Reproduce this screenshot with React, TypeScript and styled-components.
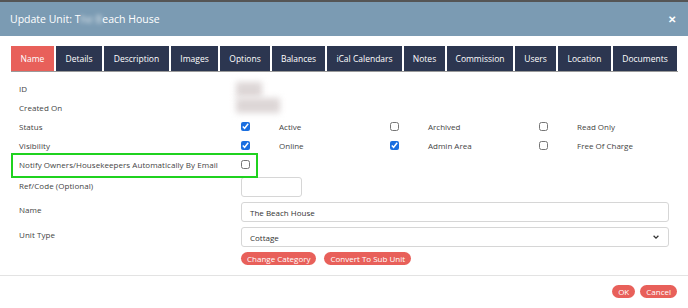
import React from 'react';
import styled, { createGlobalStyle } from 'styled-components';

const Global = createGlobalStyle`
	html, body {
		margin: 0;
		padding: 0;
		background: #fff;
	}

	body {
		font-family: 'Open Sans', 'Liberation Sans', sans-serif;
		color: #333;
	}
`;

const tabs = [
	{ label: 'Name', w: 43 },
	{ label: 'Details', w: 46 },
	{ label: 'Description', w: 65 },
	{ label: 'Images', w: 47 },
	{ label: 'Options', w: 50 },
	{ label: 'Balances', w: 53 },
	{ label: 'iCal Calendars', w: 75 },
	{ label: 'Notes', w: 41 },
	{ label: 'Commission', w: 66 },
	{ label: 'Users', w: 41 },
	{ label: 'Location', w: 53 },
	{ label: 'Documents', w: 64 },
];

// styles
const styles = {
	modal: {
		Modal: styled.div`
			width: 688px;
			height: 308px;
			border-top: 2px solid #555;
			box-sizing: border-box;
			display: flex;
			flex-flow: column;
			overflow: hidden;
		`,

		Header: styled.div`
			flex: 0 0 34px;

			background: #7b9bb3;
			padding: 0 12px 0 10px;
			align-items: center;
			display: flex;
		`,

		Title: styled.div`
			flex: 1 1 auto;

			color: #fff;
			font-size: 10.5px;
		`,

		Blur: styled.span`
			filter: blur(2px);
			opacity: 0.8;
		`,

		Close: styled.div`
			color: #fff;
			font-weight: 700;
			font-size: 10px;
			line-height: 1;
		`,

		Body: styled.div`
			flex: 0 0 auto;

			padding: 10px 10px 10px 11px;
		`,

		Divider: styled.div`
			flex: 0 0 1px;

			background: #e3e3e3;
		`,

		Footer: styled.div`
			flex: 0 0 auto;

			padding: 9px 11px 0 0;
			justify-content: flex-end;
			display: flex;
			gap: 5px;
		`,
	},

	tabs: {
		Bar: styled.div`
			border-bottom: 1px solid #9a9a9a;
			display: flex;
			gap: 2px;
		`,

		Tab: styled.div<{ $active?: boolean; $w: number }>`
			flex: 0 0 ${(p) => p.$w}px;

			background: ${(p) => (p.$active ? '#e8605a' : '#2c3650')};
			color: #fff;
			height: 25px;
			font-size: 8.5px;
			justify-content: center;
			align-items: center;
			display: flex;
		`,
	},

	form: {
		Form: styled.div`
			padding: 7px 0 0 8px;
			flex-flow: column;
			display: flex;
		`,

		Row: styled.div`
			height: 19px;
			align-items: center;
			display: flex;
			position: relative;
		`,

		FieldRow: styled.div<{ $mt?: number }>`
			height: 25px;
			margin-top: ${(p) => p.$mt ?? 0}px;
			align-items: flex-start;
			display: flex;
		`,

		Highlight: styled.div`
			position: absolute;
			left: -8px;
			top: -2px;
			width: 243px;
			height: 21px;
			border: 2px solid #1fd21f;
			pointer-events: none;
		`,

		Label: styled.div<{ $pt?: number }>`
			flex: 0 0 218px;

			padding-top: ${(p) => p.$pt ?? 0}px;
			font-size: 8px;
			letter-spacing: 0.05px;
			color: #444;
		`,

		Value: styled.div<{ $w: number; $dy: number }>`
			filter: blur(3px);
			background: #ddd6d6;
			width: ${(p) => p.$w}px;
			height: 15px;
			margin-left: -1px;
			transform: translateY(${(p) => p.$dy}px);
		`,

		Check: styled.div`
			flex: 0 0 149px;

			align-items: center;
			display: flex;
		`,

		Box: styled.input`
			width: 9px;
			height: 9px;
			margin: 0 29px 0 4px;
			accent-color: #1b6fe0;
		`,

		CheckText: styled.span`
			font-size: 8px;
			color: #444;
		`,

		Input: styled.div<{ $w?: number }>`
			width: ${(p) => (p.$w ? `${p.$w}px` : 'auto')};
			flex: ${(p) => (p.$w ? '0 0 auto' : '1 1 auto')};

			height: 20px;
			box-sizing: border-box;
			border: 1px solid #d6d6d6;
			border-radius: 3px;
			padding: 0 8px;
			font-size: 8px;
			color: #333;
			align-items: center;
			display: flex;
			margin: 0 9px 0 4px;
		`,

		Chevron: styled.svg`
			margin-left: auto;
			width: 8px;
			height: 8px;
		`,

		Actions: styled.div`
			padding-left: 222px;
			gap: 8px;
			display: flex;
		`,
	},

	Pill: styled.div`
		background: #e8605a;
		color: #fff;
		height: 13px;
		padding: 0 6px;
		border-radius: 7px;
		font-size: 8px;
		align-items: center;
		display: flex;
	`,
};

// components
const Tabs = () => {
	const { Bar, Tab } = styles.tabs;

	return (
		<Bar>
			{tabs.map((t, i) => (
				<Tab key={t.label} $active={i === 0} $w={t.w}>
					{t.label}
				</Tab>
			))}
		</Bar>
	);
};

const CheckCell = ({ label, checked }: { label: string; checked: boolean }) => {
	const { Check, Box, CheckText } = styles.form;

	return (
		<Check>
			<Box type='checkbox' defaultChecked={checked} />
			<CheckText>{label}</CheckText>
		</Check>
	);
};

const Form = () => {
	const { Form, Row, FieldRow, Highlight, Label, Value, Input, Chevron, Actions, Box } = styles.form;
	const { Pill } = styles;

	return (
		<Form>
			<Row>
				<Label>ID</Label>
				<Value $w={26} $dy={1} />
			</Row>
			<Row>
				<Label>Created On</Label>
				<Value $w={44} $dy={-2} />
			</Row>
			<Row>
				<Label>Status</Label>
				<CheckCell label='Active' checked />
				<CheckCell label='Archived' checked={false} />
				<CheckCell label='Read Only' checked={false} />
			</Row>
			<Row>
				<Label>Visibility</Label>
				<CheckCell label='Online' checked />
				<CheckCell label='Admin Area' checked />
				<CheckCell label='Free Of Charge' checked={false} />
			</Row>
			<Row>
				<Highlight />
				<Label>Notify Owners/Housekeepers Automatically By Email</Label>
				<Box type='checkbox' />
			</Row>
			<FieldRow $mt={3}>
				<Label $pt={3}>Ref/Code (Optional)</Label>
				<Input $w={61} />
			</FieldRow>
			<FieldRow>
				<Label $pt={2}>Name</Label>
				<Input>The Beach House</Input>
			</FieldRow>
			<FieldRow>
				<Label $pt={2}>Unit Type</Label>
				<Input>
					Cottage
					<Chevron viewBox='0 0 10 10'>
						<path d='M2 3.5 L5 6.5 L8 3.5' fill='none' stroke='#333' strokeWidth='1.6' />
					</Chevron>
				</Input>
			</FieldRow>
			<Actions>
				<Pill>Change Category</Pill>
				<Pill>Convert To Sub Unit</Pill>
			</Actions>
		</Form>
	);
};

export default function App() {
	const { Modal, Header, Title, Blur, Close, Body, Divider, Footer } = styles.modal;
	const { Pill } = styles;

	return (
		<>
			<Global />
			<Modal>
				<Header>
					<Title>
						Update Unit: T<Blur>he B</Blur>each House
					</Title>
					<Close>✕</Close>
				</Header>
				<Body>
					<Tabs />
					<Form />
				</Body>
				<Divider />
				<Footer>
					<Pill>OK</Pill>
					<Pill>Cancel</Pill>
				</Footer>
			</Modal>
		</>
	);
}
